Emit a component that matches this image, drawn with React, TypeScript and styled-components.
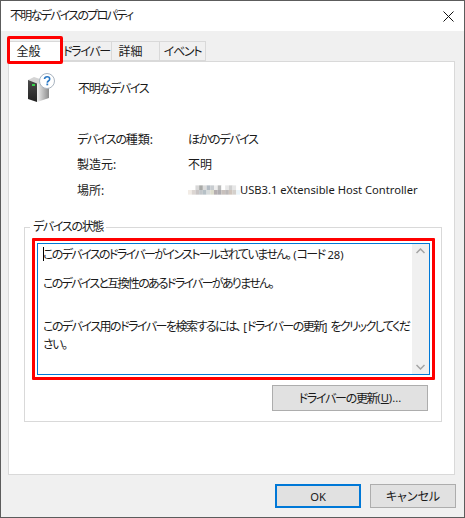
import React from 'react';
import styled, { createGlobalStyle } from 'styled-components';

const GlobalStyle = createGlobalStyle`
  html, body {
    margin: 0;
    padding: 0;
    background: #fff;
  }
  * {
    box-sizing: border-box;
  }
`;

const Dialog = styled.div`
  width: 465px;
  height: 518px;
  display: flex;
  flex-direction: column;
  border: 1px solid #5c5c5c;
  background: #f0f0f0;
  color: #1a1a1a;
  font-family: 'Noto Sans', 'Noto Sans CJK JP', sans-serif;
  font-size: 12px;
  font-feature-settings: 'palt';
  letter-spacing: -1.3px;
  white-space: pre;
  overflow: hidden;
`;

const Plain = styled.span`
  letter-spacing: 0;
`;

const Latin = styled.span`
  letter-spacing: 0;
  font-size: 11.2px;
`;

const TitleBar = styled.div`
  height: 30px;
  flex: none;
  display: flex;
  align-items: center;
  justify-content: space-between;
  padding: 0 10px 0 9px;
  background: #fff;
`;

const Title = styled.span`
  line-height: 30px;
  letter-spacing: -1.7px;
`;

const Body = styled.div`
  flex: 1;
  display: flex;
  flex-direction: column;
  padding: 10px 9px 8px 7px;
`;

const TabStrip = styled.div`
  position: relative;
  display: flex;
  height: 20px;
  flex: none;
`;

const Tab = styled.div<{ $active?: boolean; $width: number; $shift?: number }>`
  width: ${(p) => p.$width}px;
  height: ${(p) => (p.$active ? 21 : 20)}px;
  display: flex;
  align-items: center;
  justify-content: center;
  padding-right: ${(p) => p.$shift ?? 0}px;
  padding-bottom: ${(p) => (p.$active ? 2 : 0)}px;
  background: ${(p) => (p.$active ? '#fff' : '#f0f0f0')};
  border: 1px solid #d9d9d9;
  border-left-width: ${(p) => (p.$active ? 1 : 0)}px;
  border-bottom-width: ${(p) => (p.$active ? 0 : 1)}px;
  z-index: ${(p) => (p.$active ? 1 : 0)};
`;

const TabHighlight = styled.div`
  position: absolute;
  left: -1px;
  top: -5px;
  width: 56px;
  height: 28px;
  border: 3px solid #ff0000;
  border-radius: 2px;
  z-index: 2;
`;

const Page = styled.div`
  height: 414px;
  flex: none;
  display: flex;
  flex-direction: column;
  background: #fff;
  border: 1px solid #d9d9d9;
  padding: 11px 12px 0 15px;
`;

const DeviceHeader = styled.div`
  display: flex;
  align-items: center;
  height: 30px;
  gap: 22px;
  padding-left: 4px;
`;

const InfoList = styled.div`
  display: flex;
  flex-direction: column;
  margin-top: 23px;
  margin-left: 53px;
`;

const InfoRow = styled.div`
  display: grid;
  grid-template-columns: 111px 1fr;
  align-items: center;
  height: 25.5px;
`;

const Location = styled.span`
  display: flex;
  align-items: center;
`;

const GroupBox = styled.div`
  position: relative;
  height: 195px;
  margin-top: 24px;
  border: 1px solid #d9d9d9;
  padding: 10px 6px 0 7px;
`;

const GroupLabel = styled.span`
  position: absolute;
  left: 5px;
  top: -9px;
  padding: 0 3px;
  background: #fff;
  line-height: 16px;
`;

const StatusHighlight = styled.div`
  height: 142px;
  border: 3px solid #ff0000;
  border-radius: 1px;
  padding: 2px;
`;

const StatusBox = styled.div`
  position: relative;
  height: 100%;
  display: flex;
  border: 1px solid #0078d7;
`;

const StatusText = styled.div`
  flex: 1;
  min-width: 0;
  padding: 2px 4px 0 5px;
  line-height: 18px;
`;

const Caret = styled.span`
  position: absolute;
  left: 5px;
  top: 3px;
  width: 1px;
  height: 14px;
  background: #000;
`;

const StatusLine = styled.p<{ $gap: number; $squeeze: number }>`
  margin: ${(p) => p.$gap}px 0 0;
  letter-spacing: ${(p) => p.$squeeze}px;
`;

const ScrollBar = styled.div`
  width: 17px;
  flex: none;
  display: flex;
  flex-direction: column;
  justify-content: space-between;
  align-items: center;
  background: #f0f0f0;
  padding: 4px 0;
`;

const UpdateRow = styled.div`
  display: flex;
  justify-content: flex-end;
  margin-top: 5px;
  padding-right: 7px;
`;

const Button = styled.div<{ $primary?: boolean; $width: number; $height: number }>`
  width: ${(p) => p.$width}px;
  height: ${(p) => p.$height}px;
  display: flex;
  align-items: center;
  justify-content: center;
  background: #e1e1e1;
  border: ${(p) => (p.$primary ? '2px solid #0078d7' : '1px solid #adadad')};
`;

const Footer = styled.div`
  display: flex;
  justify-content: flex-end;
  gap: 9px;
  margin-top: 9px;
  margin-right: -1px;
`;

const Underline = styled.span`
  text-decoration: underline;
`;

const CloseIcon = () => (
  <svg width="11" height="11" viewBox="0 0 11 11">
    <path d="M.5.5l10 10M10.500.5l-10 10" stroke="#111" strokeWidth="1" fill="none" />
  </svg>
);

const DeviceIcon = () => (
  <svg width="28" height="30" viewBox="0 0 28 30">
    <defs>
      <linearGradient id="front" x1="0" y1="0" x2="0" y2="1">
        <stop offset="0" stopColor="#4a4a4a" />
        <stop offset="1" stopColor="#222" />
      </linearGradient>
      <linearGradient id="side" x1="0" y1="0" x2="1" y2="0">
        <stop offset="0" stopColor="#f0f0f0" />
        <stop offset="1" stopColor="#8c8c8c" />
      </linearGradient>
    </defs>
    <path d="M9 7l12 3v15l-12 4z" fill="url(#side)" />
    <path d="M0 7l9 0v22l-9-3z" fill="url(#front)" />
    <path d="M0 7l6-3 15 5-12 1.500z" fill="#d4d4d4" />
    <rect x="4" y="11" width="3" height="2" fill="#35d04a" />
    <circle cx="19" cy="8" r="7.500" fill="#fff" stroke="#a9b4c0" strokeWidth="1" />
    <path
      d="M16.500 6c.2-1.600 1.300-2.300 2.600-2.300 1.500 0 2.600.9 2.600 2.200 0 1.100-.6 1.600-1.300 2.100-.7.500-1.100.9-1.100 1.800"
      stroke="#2a78c4"
      strokeWidth="1.600"
      fill="none"
    />
    <rect x="18.400" y="10.500" width="1.800" height="1.800" fill="#2a78c4" />
  </svg>
);

// pixelated vendor name in front of the controller name
const MOSAIC_TOP = ['#fff', '#fff', '#d8d8d8', '#a9aaa8', '#dcdcdc', '#b4bcc4', '#c8ccd0', '#eee', '#bbbcbc', '#fff', '#e8e8e8', '#d0d0d0', '#e6e6e6', '#fff'];
const MOSAIC_BOTTOM = ['#f2ece6', '#dcd6d2', '#c8c4c4', '#c2c6ca', '#b6c0c6', '#d8dcdc', '#dcdccc', '#b4aeb0', '#aeacb0', '#c8c0bc', '#bcb8b8', '#cfc4bc', '#d4d0cc', '#eaf4fa'];

const Mosaic = () => (
  <svg width="52" height="14" viewBox="0 0 56 14">
    {MOSAIC_TOP.map((c, i) => (
      <rect key={i} x={i * 4} y={2} width={4} height={5} fill={c} />
    ))}
    {MOSAIC_BOTTOM.map((c, i) => (
      <rect key={i} x={i * 4} y={7} width={4} height={5} fill={c} />
    ))}
  </svg>
);

const Chevron = ({ up }: { up?: boolean }) => (
  <svg width="9" height="6" viewBox="0 0 9 6">
    <path d={up ? 'M.5 5l4-4 4 4' : 'M.5 1l4 4 4-4'} stroke="#a3a3a3" strokeWidth="1.500" fill="none" />
  </svg>
);

const App: React.FC = () => {
  return (
    <>
      <GlobalStyle />
      <Dialog>
        <TitleBar>
          <Title>不明なデバイスのプロパティ</Title>
          <CloseIcon />
        </TitleBar>
        <Body>
          <TabStrip>
            <TabHighlight />
            <Tab $active $width={54} $shift={13}><Plain>全般</Plain></Tab>
            <Tab $width={50}>ドライバー</Tab>
            <Tab $width={48} $shift={10}><Plain>詳細</Plain></Tab>
            <Tab $width={46}>イベント</Tab>
          </TabStrip>
          <Page>
            <DeviceHeader>
              <DeviceIcon />
              <span>不明なデバイス</span>
            </DeviceHeader>
            <InfoList>
              <InfoRow>
                <span>デバイスの<Plain>種類:</Plain></span>
                <span>ほかのデバイス</span>
              </InfoRow>
              <InfoRow>
                <Plain>製造元:</Plain>
                <Plain>不明</Plain>
              </InfoRow>
              <InfoRow>
                <Plain>場所:</Plain>
                <Location>
                  <Mosaic />
                  <Latin>USB3.1 eXtensible Host Controller</Latin>
                </Location>
              </InfoRow>
            </InfoList>
            <GroupBox>
              <GroupLabel>デバイスの状態</GroupLabel>
              <StatusHighlight>
                <StatusBox>
                  <Caret />
                  <StatusText>
                    <StatusLine $gap={0} $squeeze={-1.6}>
                      このデバイスのドライバーがインストールされていません。<Latin> (</Latin>コード<Latin> 28)</Latin>
                    </StatusLine>
                    <StatusLine $gap={11} $squeeze={-1.7}>このデバイスと互換性のあるドライバーがありません。</StatusLine>
                    <StatusLine $gap={25} $squeeze={-1.5}>
                      このデバイス用のドライバーを検索するには、<Latin> [</Latin>ドライバーの更新<Latin>] </Latin>をクリックしてくだ
                      <br />
                      さい。
                    </StatusLine>
                  </StatusText>
                  <ScrollBar>
                    <Chevron up />
                    <Chevron />
                  </ScrollBar>
                </StatusBox>
              </StatusHighlight>
              <UpdateRow>
                <Button $width={156} $height={26}>
                  ドライバーの更新<Latin>(<Underline>U</Underline>)...</Latin>
                </Button>
              </UpdateRow>
            </GroupBox>
          </Page>
          <Footer>
            <Button $primary $width={86} $height={24}><Latin>OK</Latin></Button>
            <Button $width={86} $height={24}><Plain>キャンセル</Plain></Button>
          </Footer>
        </Body>
      </Dialog>
    </>
  );
};

export default App;
